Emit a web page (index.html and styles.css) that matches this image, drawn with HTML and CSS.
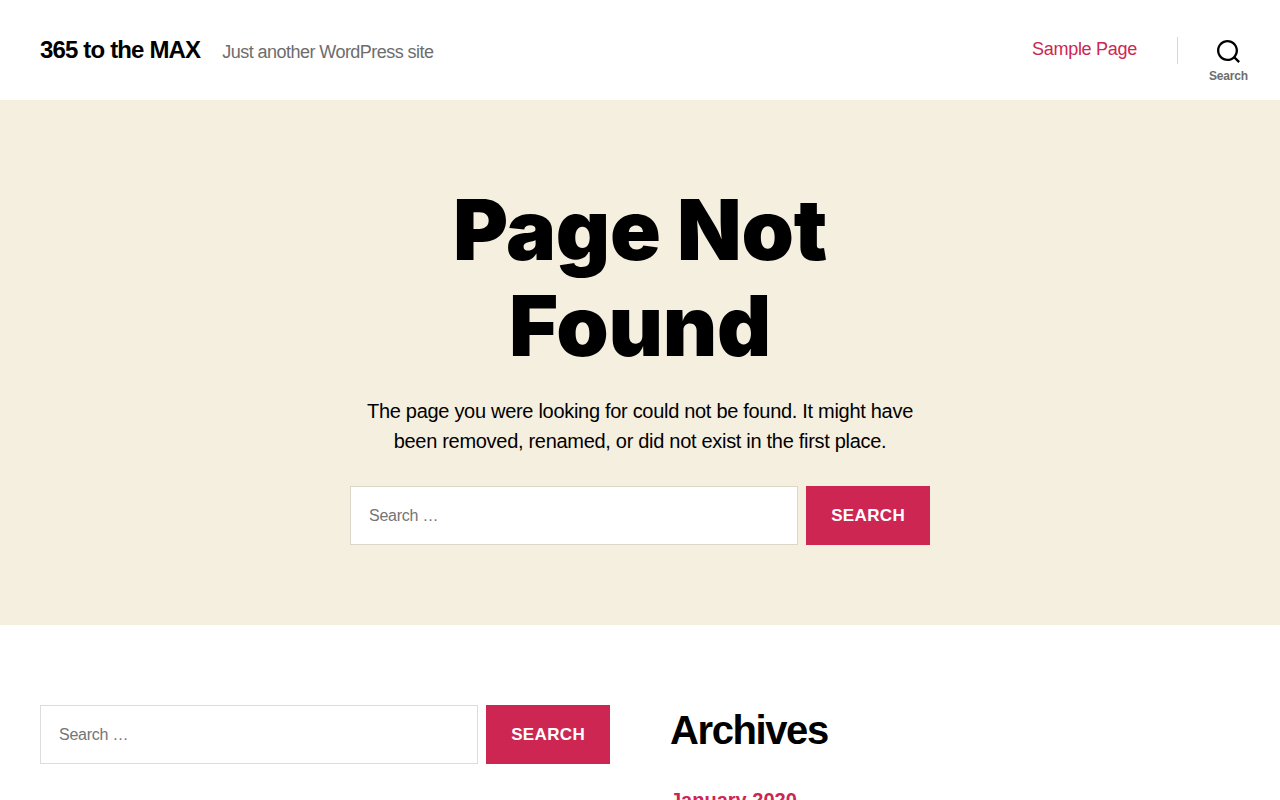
FILE: index.html
```html
<!DOCTYPE html>
<html lang="en-US">
<head>
<meta charset="UTF-8">
<meta name="viewport" content="width=device-width, initial-scale=1">
<title>Page not found – 365 to the MAX</title>
<link rel="stylesheet" href="styles.css">
</head>
<body>
<header class="site-header">
  <div class="site-titles">
    <a class="site-title" href="#">365 to the MAX</a>
    <span class="site-description">Just another WordPress site</span>
  </div>
  <div class="site-navigation">
    <nav class="primary-menu"><a href="#">Sample Page</a></nav>
    <div class="search-toggle-wrap">
      <button class="search-toggle" type="button">
        <svg width="23" height="23" viewBox="0 0 23 23" aria-hidden="true"><path fill-rule="evenodd" d="M38.710696,48.0601792 L43,52.3494831 L41.3494831,54 L37.0601792,49.710696 C35.2632422,51.1481185 32.9839107,52.0076499 30.5038249,52.0076499 C24.7027226,52.0076499 20,47.3049272 20,41.5038249 C20,35.7027226 24.7027226,31 30.5038249,31 C36.3049272,31 41.0076499,35.7027226 41.0076499,41.5038249 C41.0076499,43.9839107 40.1481185,46.2632422 38.710696,48.0601792 Z M36.3875844,47.1716785 C37.8030221,45.7026647 38.6734666,43.7048964 38.6734666,41.5038249 C38.6734666,36.9918565 35.0157934,33.3341833 30.5038249,33.3341833 C25.9918565,33.3341833 22.3341833,36.9918565 22.3341833,41.5038249 C22.3341833,46.0157934 25.9918565,49.6734666 30.5038249,49.6734666 C32.7048964,49.6734666 34.7026647,48.8030221 36.1716785,47.3875844 C36.2023931,47.347638 36.2360451,47.3092237 36.2726343,47.2726343 C36.3092237,47.2360451 36.347638,47.2023931 36.3875844,47.1716785 Z" transform="translate(-20 -31)"/></svg>
        <span>Search</span>
      </button>
    </div>
  </div>
</header>
<main class="error-page">
  <div class="error-content">
    <h1 class="entry-title">Page Not Found</h1>
    <p class="intro-text">The page you were looking for could not be found. It might have been removed, renamed, or did not exist in the first place.</p>
    <form class="search-form" role="search">
      <input class="search-field" type="search" placeholder="Search …" aria-label="Search for">
      <button class="search-submit" type="submit">Search</button>
    </form>
  </div>
</main>
<footer class="footer-widgets">
  <div class="footer-column">
    <form class="search-form" role="search">
      <input class="search-field" type="search" placeholder="Search …" aria-label="Search for">
      <button class="search-submit" type="submit">Search</button>
    </form>
  </div>
  <div class="footer-column">
    <h2 class="widget-title">Archives</h2>
    <ul class="archive-list"><li><a href="#">January 2020</a></li></ul>
  </div>
</footer>
</body>
</html>
```
FILE: styles.css
```css
*, *::before, *::after {
  box-sizing: border-box;
}

body {
  margin: 0;
  background: #fff;
  color: #000;
  font-family: "Liberation Sans", Arial, sans-serif;
  font-size: 18px;
  letter-spacing: -0.015em;
}

a {
  color: #cd2653;
  text-decoration: none;
}

button,
input {
  margin: 0;
  border-radius: 0;
  font-family: inherit;
}

.site-header {
  display: flex;
  align-items: center;
  justify-content: space-between;
  height: 100px;
  padding: 0 0 0 40px;
}

.site-titles {
  display: flex;
  align-items: baseline;
  gap: 22px;
}

.site-title {
  color: #000;
  font-size: 24px;
  font-weight: 700;
  line-height: 24px;
  letter-spacing: -0.035em;
}

.site-description {
  color: #6d6d6d;
  font-size: 18px;
  letter-spacing: -0.03em;
}

.site-navigation {
  display: flex;
  align-items: center;
  height: 100%;
}

.primary-menu {
  padding-right: 40px;
  padding-bottom: 2px;
}

.search-toggle-wrap {
  position: relative;
  display: flex;
  align-items: center;
  height: 100%;
}

.search-toggle-wrap::before {
  content: "";
  position: absolute;
  top: 37px;
  left: 0;
  width: 1px;
  height: 27px;
  background: #dcd7ca;
}

.search-toggle {
  display: flex;
  flex-direction: column;
  align-items: center;
  gap: 6px;
  padding: 22px 32px 0;
  border: 0;
  background: none;
  color: #6d6d6d;
  font-size: 12px;
  font-weight: 600;
  line-height: 14px;
  letter-spacing: -0.015em;
}

.search-toggle svg {
  fill: #000;
}

.error-page {
  padding: 82px 40px 80px;
  background: #f5efe0;
}

.error-content {
  max-width: 580px;
  margin: 0 auto;
  text-align: center;
}

.entry-title {
  margin: 0 0 22px;
  font-family: Inter, "Liberation Sans", sans-serif;
  font-size: 84px;
  font-weight: 900;
  line-height: 96px;
}

.intro-text {
  margin: 0 0 30px;
  font-size: 20px;
  line-height: 30px;
  letter-spacing: -0.015em;
}

.search-form {
  display: flex;
  gap: 8px;
}

.search-field {
  flex: 1;
  min-width: 0;
  height: 59px;
  padding: 0 18px;
  border: 1px solid #dcd7ca;
  background: #fff;
  font-size: 16px;
  letter-spacing: -0.015em;
  appearance: none;
}

.search-field::placeholder {
  color: #757575;
}

.search-submit {
  padding: 0 25px;
  border: 0;
  background: #cd2653;
  color: #fff;
  font-size: 17px;
  font-weight: 600;
  letter-spacing: 0.02em;
  text-transform: uppercase;
}

.footer-widgets {
  display: grid;
  grid-template-columns: 1fr 1fr;
  gap: 60px;
  padding: 80px 40px;
}

.footer-widgets .search-field {
  border-color: #dcdcdc;
}

.widget-title {
  margin: 0 0 30px;
  font-size: 40px;
  font-weight: 700;
  line-height: 50px;
  letter-spacing: -0.035em;
}

.archive-list {
  margin: 0;
  padding: 0;
  list-style: none;
  font-size: 20px;
  font-weight: 700;
  line-height: 30px;
  letter-spacing: 0;
}
```
